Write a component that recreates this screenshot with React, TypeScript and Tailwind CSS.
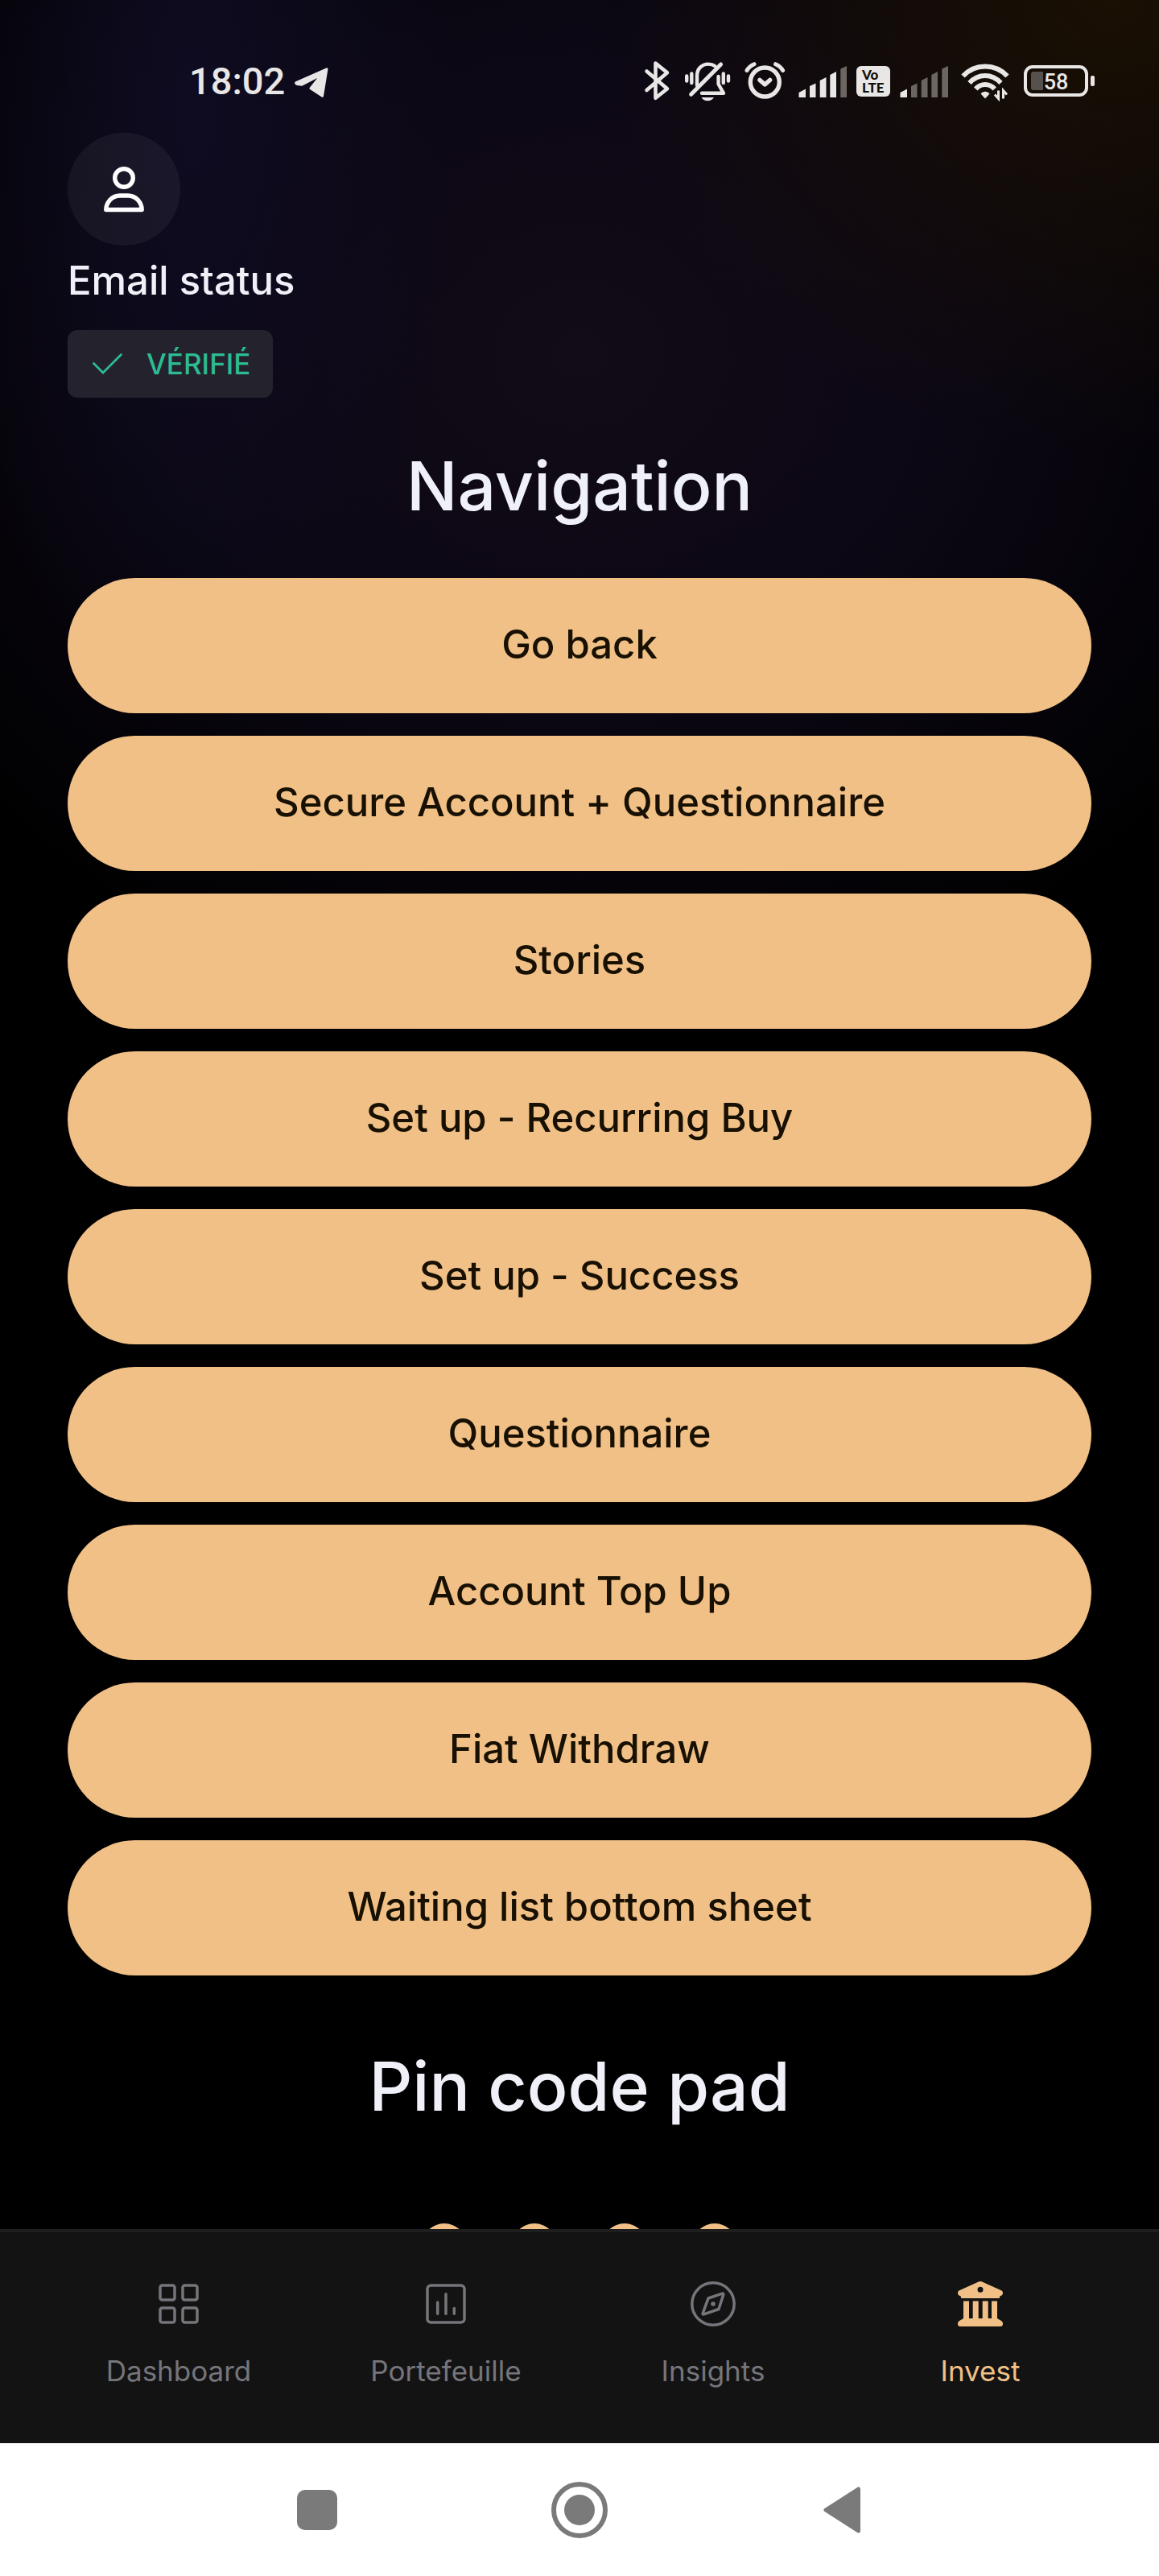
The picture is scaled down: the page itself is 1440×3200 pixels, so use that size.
import React from "react";

const NAVIGATION_ITEMS = [
  "Go back",
  "Secure Account + Questionnaire",
  "Stories",
  "Set up - Recurring Buy",
  "Set up - Success",
  "Questionnaire",
  "Account Top Up",
  "Fiat Withdraw",
  "Waiting list bottom sheet",
];

const PIN_LENGTH = 4;

const TelegramIcon = () => (
  <svg className="h-[50px] w-[43px]" viewBox="0 0 43 50" fill="currentColor" stroke="currentColor" strokeWidth="3" strokeLinejoin="round">
    <path d="M2 26.5 40 9.8 34.5 43.2 20 33.8 29.8 21.5Q30.5 18 27 20L9 29.2 3 28.4Q1 27.5 2 26.5Z" />
  </svg>
);

const BluetoothIcon = () => (
  <svg className="h-[50px] w-[39px]" viewBox="0 0 39 50" fill="none" stroke="currentColor" strokeWidth="4.6" strokeLinecap="round" strokeLinejoin="round">
    <path d="M3.5 12.5 29 34.3 14.5 45.8V2.6L29 14.3 3.5 36" />
  </svg>
);

const MutedBellIcon = () => (
  <svg className="h-[50px] w-[62px]" viewBox="0 0 62 50" fill="none" stroke="currentColor" strokeWidth="4.4" strokeLinecap="round" strokeLinejoin="round">
    <path d="M2.2 18.5v6M8.3 15.5V27M47.8 15.5V27M54 18.5v6" />
    <path d="M15 30V18C15 9.5 21 3.6 29 3.6c3 0 6 .8 8.2 2.4M41.6 19v9.5L48 39.8H21" />
    <path d="M7.6 41.2 44.6 4" strokeWidth="5" />
    <path d="M20.5 45h15.4c-1.2 2.7-4 4.2-7.7 4.2s-6.5-1.5-7.7-4.2z" fill="currentColor" stroke="none" />
  </svg>
);

const AlarmIcon = () => (
  <svg className="h-[50px] w-[55px]" viewBox="0 0 55 50" fill="none" stroke="currentColor" strokeWidth="5.4" strokeLinecap="round" strokeLinejoin="round">
    <circle cx="25.3" cy="26" r="18" />
    <path d="m19 23.4 6.3 5.6 6.3-5.6" />
    <path d="M3 11.500C5 8 8.300 5.200 12 3.700M38.600 3.700c3.700 1.500 7 4.300 9 7.800" strokeWidth="5" />
  </svg>
);

const SIGNAL_BARS = [
  "M0.5 39 9 34.5V45H0.5Z",
  "M14 31 21.5 27.5V45H14Z",
  "M26.7 24 34.5 20V45H26.7Z",
  "M39.3 17 47 13V45H39.3Z",
  "M52.3 9.5 60 6V45H52.3Z",
];

const SignalIcon = ({ level }: { level: number }) => (
  <svg className="h-[50px] w-[60px]" viewBox="0 0 60 50">
    {SIGNAL_BARS.map((d, index) => (
      <path key={d} d={d} fill={index < level ? "#e9e7e6" : "#6c6663"} />
    ))}
  </svg>
);

const WifiIcon = () => (
  <svg className="h-[50px] w-[70px]" viewBox="0 0 70 50" fill="none" stroke="currentColor" strokeWidth="6">
    <path d="M6.5 18.5C14 10.5 23.5 6.500 34 6.500s20 4 27.500 12" />
    <path d="M14.5 27C20 21 26.500 18 34 18s14 3 19.500 9" />
    <path d="M22.3 34.5C25.5 30.8 29.5 29 34 29s8.500 1.800 11.700 5.500" />
    <path d="M28.5 40.5c3-3.6 8-3.600 11 0L34 46.500z" fill="currentColor" stroke="none" />
    <path d="M50.500 36.500v10l-4.500-5M56.500 46.500v-10l4.500 5" strokeWidth="3" />
  </svg>
);

const BatteryIcon = () => (
  <svg className="h-[50px] w-[88px]" viewBox="0 0 88 50">
    <rect x="2" y="7" width="76" height="35" rx="9" fill="none" stroke="currentColor" strokeWidth="4" />
    <path d="M12 13h12v23H12a3 3 0 0 1-3-3V16a3 3 0 0 1 3-3z" fill="#57514d" />
    <rect x="83" y="18" width="5" height="13" rx="2" fill="currentColor" />
    <text x="40" y="35" textAnchor="middle" fill="currentColor" className="font-[Roboto] text-[27px] font-medium">
      58
    </text>
  </svg>
);

const UserIcon = () => (
  <svg className="h-[58px] w-[50px]" viewBox="0 0 50 58" fill="none" stroke="currentColor" strokeWidth="5.4" strokeLinejoin="round">
    <circle cx="25" cy="15" r="11.3" />
    <path d="M2.8 54.5C2.8 45.5 10 37 20 37h10c10 0 17.2 8.500 17.200 17.500z" />
  </svg>
);

const DashboardIcon = () => (
  <svg className="size-14" viewBox="0 0 56 56" fill="none" stroke="currentColor" strokeWidth="3.5">
    <rect x="5" y="5" width="18" height="18" rx="2.5" />
    <rect x="33" y="5" width="18" height="18" rx="2.5" />
    <rect x="5" y="33" width="18" height="18" rx="2.5" />
    <rect x="33" y="33" width="18" height="18" rx="2.5" />
  </svg>
);

const ChartIcon = () => (
  <svg className="size-14" viewBox="0 0 56 56" fill="none" stroke="currentColor" strokeWidth="3.5" strokeLinecap="round">
    <rect x="5" y="5" width="46" height="46" rx="4.5" />
    <path d="M17.7 26v14.300M28 15.700v24.600M38.300 33.500v6.800" />
  </svg>
);

const CompassIcon = () => (
  <svg className="size-14" viewBox="0 0 56 56" fill="none" stroke="currentColor" strokeWidth="3.5" strokeLinejoin="round">
    <circle cx="28" cy="28" r="26.2" />
    <path d="M22 21 39.3 15.2Q41.3 14.7 40.7 16.7L35 34.5 16.5 40.8Q14.6 41.3 15.3 39.3Z" />
    <circle cx="28" cy="28" r="2.8" fill="currentColor" stroke="none" />
  </svg>
);

const BankIcon = () => (
  <svg className="size-14" viewBox="0 0 56 56" fill="currentColor">
    <path
      fillRule="evenodd"
      d="M25.8.5a5 5 0 0 1 4.4 0L54 11.3c1.3.7 2 1.8 2 3.2 0 2-1.4 3.5-3.4 3.5l-1 3H4.4l-1-3C1.4 18 0 16.5 0 14.5c0-1.4.7-2.5 2-3.2zM28 6.8a3.5 3.5 0 1 0 0 7 3.5 3.5 0 0 0 0-7z"
    />
    <path d="M7 24.5h7V46h4.7V24.5h7V46h5V24.5h7V46H42V24.5h7V46l5 3c1.3.9 2 2 2 3.7V53c0 1.8-1.2 3-3 3H3c-1.8 0-3-1.2-3-3v-.3C0 51 .7 49.9 2 49l5-3z" />
  </svg>
);

const TABS = [
  { label: "Dashboard", Icon: DashboardIcon, active: false },
  { label: "Portefeuille", Icon: ChartIcon, active: false },
  { label: "Insights", Icon: CompassIcon, active: false },
  { label: "Invest", Icon: BankIcon, active: true },
];

const StatusBar = () => (
  <div className="flex shrink-0 items-center justify-between pt-[75px] pr-20 pl-[235px] text-[#e9e7e6]">
    <div className="flex items-center gap-3">
      <span className="font-[Roboto] text-[47px] leading-[52px] font-medium">18:02</span>
      <TelegramIcon />
    </div>
    <div className="flex items-center gap-3">
      <BluetoothIcon />
      <MutedBellIcon />
      <AlarmIcon />
      <SignalIcon level={4} />
      <div className="flex h-[38px] w-[42px] flex-col items-start justify-center rounded-md bg-[#e9e7e6] pl-[7px] font-[Lato] text-[17px] leading-4 font-black text-[#120c08]">
        <span>Vo</span>
        <span>LTE</span>
      </div>
      <SignalIcon level={1} />
      <WifiIcon />
      <BatteryIcon />
    </div>
  </div>
);

const Section = ({ title, children }: { title: string; children: React.ReactNode }) => (
  <section className="pt-[54px]">
    <h2 className="mb-[58px] text-center text-[84px] leading-[112px] font-medium text-[#eff0f8]">{title}</h2>
    {children}
  </section>
);

const TabBar = () => (
  <nav className="flex shrink-0 border-t-4 border-[#1e1e1e] bg-[#131313] px-14 pt-[61px] pb-[69px]">
    {TABS.map(({ label, Icon, active }) => (
      <a
        key={label}
        href="#"
        aria-current={active ? "page" : undefined}
        className={`flex flex-1 flex-col items-center gap-[34px] text-[35px] leading-[42px] ${
          active ? "text-[#f1c086]" : "text-[#75757b]"
        }`}
      >
        <Icon />
        <span>{label}</span>
      </a>
    ))}
  </nav>
);

const SystemBar = () => (
  <div className="flex h-[165px] shrink-0 items-center justify-center gap-64 bg-white text-[#7a7a7a]">
    <button type="button" aria-label="Recent apps" className="flex w-[70px] justify-center">
      <span className="size-[50px] rounded-[10px] bg-current" />
    </button>
    <button type="button" aria-label="Home" className="flex size-[70px] items-center justify-center rounded-full border-[6px] border-current">
      <span className="size-[38px] rounded-full bg-current" />
    </button>
    <button type="button" aria-label="Back" className="flex w-[70px] justify-center">
      <svg className="h-[58px] w-[46px]" viewBox="0 0 46 58" fill="currentColor" stroke="currentColor" strokeWidth="5" strokeLinejoin="round">
        <path d="M43.5 3v52L3 29z" />
      </svg>
    </button>
  </div>
);

const App: React.FC = () => {
  return (
    <div className="flex h-screen flex-col bg-black font-[Inter,sans-serif] [font-variant-ligatures:none]">
      <div className="flex min-h-0 flex-1 flex-col overflow-hidden bg-[radial-gradient(ellipse_320px_760px_at_240px_130px,#0f0c22_0%,transparent_100%),radial-gradient(ellipse_640px_560px_at_96%_0%,#1a1004_0%,transparent_100%),radial-gradient(ellipse_1000px_860px_at_50%_440px,#120b18_0%,#0b0713_50%,transparent_100%)]">
        <StatusBar />

        <main className="px-[84px] pt-[38px]">
          <div className="flex size-[140px] items-center justify-center rounded-full bg-white/5 text-white">
            <UserIcon />
          </div>
          <p className="mt-2.5 text-[49px] leading-[68px] font-medium text-[#eff0f8]">Email status</p>
          <div className="mt-[27px] inline-flex h-[84px] items-center gap-[30px] rounded-xl bg-[#24222d] pr-7 pl-[31px] align-top text-[35px] leading-[42px] font-medium text-[#2dbb92]">
            <svg className="h-[26px] w-[37px]" viewBox="0 0 37 26" fill="none" stroke="currentColor" strokeWidth="2.8" strokeLinecap="round">
              <path d="M1.5 12.5 13 24 35.5 1.5" />
            </svg>
            VÉRIFIÉ
          </div>

          <Section title="Navigation">
            <div className="flex flex-col gap-7">
              {NAVIGATION_ITEMS.map((item) => (
                <button
                  key={item}
                  type="button"
                  className="h-[168px] w-full rounded-full bg-[#f1c086] pb-0.5 text-[49px] leading-[70px] font-medium text-[#171003]"
                >
                  {item}
                </button>
              ))}
            </div>
          </Section>

          <div className="pt-7">
            <Section title="Pin code pad">
              <div className="flex justify-center gap-14 pt-14">
                {Array.from({ length: PIN_LENGTH }, (_, index) => (
                  <span key={index} className="size-14 rounded-full bg-[#f1c086]" />
                ))}
              </div>
            </Section>
          </div>
        </main>
      </div>

      <TabBar />
      <SystemBar />
    </div>
  );
};

export default App;
